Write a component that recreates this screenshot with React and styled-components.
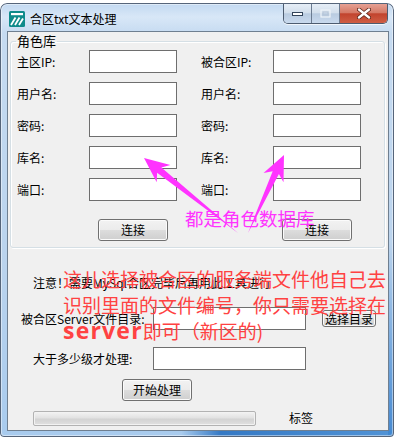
import React from "react";
import styled, { createGlobalStyle } from "styled-components";

const GlobalStyle = createGlobalStyle`
  html, body { margin: 0; padding: 0; background: #ffffff; }
  body { font-family: "Noto Sans CJK SC", "Noto Sans", sans-serif; }
`;

const Page = styled.div`
  position: relative;
  width: 399px;
  height: 437px;
  overflow: hidden;
`;

const Window = styled.div`
  box-sizing: border-box;
  width: 394px;
  height: 434px;
  margin-top: 3px;
  padding: 0 5px 6px 7px;
  display: flex;
  flex-direction: column;
  border-radius: 7px 7px 4px 4px;
  box-shadow: inset 0 0 0 1px #56657a, inset 0 0 0 2px rgba(255, 255, 255, 0.45);
  background:
    linear-gradient(90deg, rgba(58, 128, 200, 0) 0%, rgba(58, 128, 200, 0) 46%, rgba(40, 112, 192, 0.9) 56%, rgba(66, 138, 210, 0.85) 100%) left bottom / 100% 7px no-repeat,
    linear-gradient(180deg, rgba(60, 130, 205, 0) 55%, rgba(60, 130, 205, 0.9) 100%) right top / 6px 100% no-repeat,
    linear-gradient(180deg, #c1d8f1 0px, #d8e7f7 14px, #c6dbf1 30px, #bad3ed 60%, #a8cbee 100%);
`;

const TitleBar = styled.div`
  height: 28px;
  display: flex;
  align-items: flex-start;
`;

const TitleLeft = styled.div`
  display: flex;
  align-items: center;
  gap: 5px;
  padding: 8px 0 0 2px;
`;

const TitleText = styled.span`
  font-size: 12px;
  line-height: 16px;
  color: #000;
`;

const Caption = styled.div`
  display: flex;
  margin: 1px 1px 0 auto;
  height: 19px;
  border: 1px solid #4d5c70;
  border-top: none;
  border-radius: 0 0 5px 5px;
  overflow: hidden;
  box-shadow: 0 1px 0 rgba(255, 255, 255, 0.7);
`;

const CapBtn = styled.div`
  width: ${(p) => p.$w}px;
  display: flex;
  align-items: center;
  justify-content: center;
  background: ${(p) =>
    p.$close
      ? "linear-gradient(180deg, #e6a194 0%, #d57a67 45%, #c2442e 52%, #cf5e45 100%)"
      : "linear-gradient(180deg, #e6eef7 0%, #d3dfec 45%, #b9cbe0 52%, #c9daee 100%)"};
  & + & {
    border-left: 1px solid #6b7b90;
  }
`;

const Client = styled.div`
  flex: 1;
  box-sizing: border-box;
  border: 1px solid #6f7f90;
  background: #f0f0f0;
  display: flex;
  flex-direction: column;
  font-size: 12px;
  color: #000;
`;

const Group = styled.fieldset`
  margin: 2px 3px 0 2px;
  padding: 2px 0 6px 6px;
  border: 1px solid #d5dfe5;
  border-radius: 3px;
  box-shadow: inset 1px 1px 0 #fff, 1px 1px 0 #fff;
  min-width: 0;
`;

const Legend = styled.legend`
  padding: 0 1px;
  margin-left: -1px;
  font-size: 13px;
  line-height: 14px;
`;

const FieldGrid = styled.div`
  display: grid;
  grid-template-columns: 72px 112px 72px 88px;
  grid-auto-rows: 23px;
  row-gap: 9px;
  align-items: center;
`;

const Label = styled.span`
  font-size: 12px;
  line-height: 16px;
  white-space: nowrap;
  width: ${(p) => (p.$w ? `${p.$w}px` : "auto")};
  flex: none;
`;

const TextBox = styled.input`
  box-sizing: border-box;
  width: ${(p) => p.$w || 88}px;
  height: 23px;
  margin: 0;
  padding: 0 2px;
  background: #fff;
  border: 1px solid #6e6e6e;
  outline: none;
  flex: none;
`;

const ButtonRow = styled.div`
  display: flex;
  gap: 114px;
  margin-top: 18px;
  padding-left: 81px;
`;

const Btn = styled.button`
  box-sizing: border-box;
  width: ${(p) => p.$w}px;
  height: ${(p) => p.$h}px;
  margin: 0;
  padding: 0;
  flex: none;
  border: 1px solid #707070;
  border-radius: 3px;
  background: linear-gradient(180deg, #f2f2f2 0%, #ebebeb 50%, #dddddd 50%, #cfcfcf 100%);
  box-shadow: inset 0 0 0 1px #fbfbfb;
  font-family: "Noto Sans CJK SC", sans-serif;
  font-size: ${(p) => p.$fs || 12}px;
  line-height: 1;
  color: #000;
`;

const Notice = styled.div`
  margin: 27px 0 0 25px;
  font-size: 12px;
  line-height: 16px;
  white-space: nowrap;
`;

const FormRow = styled.div`
  display: flex;
  align-items: center;
  margin-top: ${(p) => p.$mt}px;
  padding-left: ${(p) => p.$pl}px;
`;

const SideBtnWrap = styled.div`
  margin-left: 16px;
  display: flex;
`;

const StartWrap = styled.div`
  margin: 9px 0 0 114px;
  display: flex;
`;

const Progress = styled.div`
  box-sizing: border-box;
  width: 223px;
  height: 15px;
  border: 1px solid #b2b2b2;
  border-radius: 2px;
  background: linear-gradient(180deg, #f3f3f3 0%, #e2e2e2 45%, #d3d3d3 55%, #e0e0e0 100%);
  box-shadow: inset 0 0 0 1px #f2f2f2;
  flex: none;
`;

const ProgLabel = styled.span`
  margin-left: 33px;
  font-size: 12px;
  line-height: 16px;
`;

const Overlay = styled.svg`
  position: absolute;
  left: 0;
  top: 0;
  pointer-events: none;
`;

const PinkNote = styled.div`
  position: absolute;
  left: 185px;
  top: 207px;
  font-size: 18.5px;
  line-height: 22px;
  color: #ff33ff;
  white-space: nowrap;
`;

const RedNote = styled.div`
  position: absolute;
  left: 63px;
  top: 266px;
  width: 330px;
  font-size: 19px;
  line-height: 26px;
  color: #ff4242;
`;

const RedLine = styled.div`
  white-space: nowrap;
  height: 26px;
`;

const Latin = styled.span`
  font-family: "Open Sans", "Noto Sans", sans-serif;
  font-weight: 700;
  font-size: 23px;
  line-height: 1;
  letter-spacing: 1.2px;
`;

function AppIcon() {
  return (
    <svg width="16" height="16" viewBox="0 0 16 16">
      <rect x="0" y="0" width="16" height="16" rx="1.5" fill="#0f8b8b" />
      <rect x="2" y="2" width="12" height="2.2" fill="#ffffff" />
      <path d="M2 14 L6.5 6.5 M6 14 L10.5 6.5 M10 14 L14 7.5" stroke="#ffffff" strokeWidth="1.8" fill="none" />
    </svg>
  );
}

function arrow(tail, tip, headLen, headHalf, shaftHalf) {
  const dx = tip[0] - tail[0];
  const dy = tip[1] - tail[1];
  const len = Math.hypot(dx, dy);
  const ux = dx / len;
  const uy = dy / len;
  const px = -uy;
  const py = ux;
  const bx = tip[0] - ux * headLen;
  const by = tip[1] - uy * headLen;
  const jx = tip[0] - ux * headLen * 0.78;
  const jy = tip[1] - uy * headLen * 0.78;
  const pts = [
    [tail[0], tail[1]],
    [jx + px * shaftHalf, jy + py * shaftHalf],
    [bx + px * headHalf, by + py * headHalf],
    [tip[0], tip[1]],
    [bx - px * headHalf, by - py * headHalf],
    [jx - px * shaftHalf, jy - py * shaftHalf],
  ];
  return pts.map((p) => `${p[0].toFixed(1)},${p[1].toFixed(1)}`).join(" ");
}

const rows = [
  ["主区IP:", "被合区IP:"],
  ["用户名:", "用户名:"],
  ["密码:", "密码:"],
  ["库名:", "库名:"],
  ["端口:", "端口:"],
];

export default function App() {
  return (
    <Page>
      <GlobalStyle />
      <Window>
        <TitleBar>
          <TitleLeft>
            <AppIcon />
            <TitleText>合区txt文本处理</TitleText>
          </TitleLeft>
          <Caption>
            <CapBtn $w={27}>
              <svg width="13" height="6" viewBox="0 0 13 6">
                <rect x="1.5" y="1.5" width="10" height="3" fill="#ffffff" stroke="#33445a" strokeWidth="1" />
              </svg>
            </CapBtn>
            <CapBtn $w={27}>
              <svg width="11" height="9" viewBox="0 0 11 9">
                <rect x="1" y="1" width="9" height="7" fill="none" stroke="#eef3f9" strokeWidth="1.2" />
                <rect x="3" y="3" width="5" height="3" fill="none" stroke="#b5c4d6" strokeWidth="1" />
              </svg>
            </CapBtn>
            <CapBtn $w={47} $close>
              <svg width="14" height="11" viewBox="0 0 14 11">
                <path d="M2 1.5 L12 9.5 M12 1.5 L2 9.5" stroke="#5a2418" strokeWidth="4" strokeLinecap="round" />
                <path d="M2 1.5 L12 9.5 M12 1.5 L2 9.5" stroke="#ffffff" strokeWidth="2.4" strokeLinecap="round" />
              </svg>
            </CapBtn>
          </Caption>
        </TitleBar>
        <Client>
          <Group>
            <Legend>角色库</Legend>
            <FieldGrid>
              {rows.map(([a, b]) => (
                <React.Fragment key={a + b}>
                  <Label>{a}</Label>
                  <TextBox readOnly value="" />
                  <Label>{b}</Label>
                  <TextBox readOnly value="" />
                </React.Fragment>
              ))}
            </FieldGrid>
            <ButtonRow>
              <Btn $w={70} $h={22}>连接</Btn>
              <Btn $w={70} $h={22}>连接</Btn>
            </ButtonRow>
          </Group>
          <Notice>注意！需要MySql合区完毕后再用此工具进行</Notice>
          <FormRow $mt={16} $pl={13}>
            <Label $w={132}>被合区Server文件目录:</Label>
            <TextBox $w={153} readOnly value="" />
            <SideBtnWrap>
              <Btn $w={54} $h={17} $fs={12}>选择目录</Btn>
            </SideBtnWrap>
          </FormRow>
          <FormRow $mt={17} $pl={25}>
            <Label $w={120}>大于多少级才处理:</Label>
            <TextBox $w={153} readOnly value="" />
          </FormRow>
          <StartWrap>
            <Btn $w={70} $h={22}>开始处理</Btn>
          </StartWrap>
          <FormRow $mt={9} $pl={25}>
            <Progress />
            <ProgLabel>标签</ProgLabel>
          </FormRow>
        </Client>
      </Window>

      <Overlay width="399" height="437" viewBox="0 0 399 437">
        <polygon points={arrow([238, 233], [144, 158], 25, 11, 3.4)} fill="#ff33ff" />
        <polygon points={arrow([248, 233], [284, 155], 25, 11, 3.4)} fill="#ff33ff" />
      </Overlay>
      <PinkNote>都是角色数据库</PinkNote>
      <RedNote>
        <RedLine>这儿选择被合区的服务端文件他自己去</RedLine>
        <RedLine>识别里面的文件编号，你只需要选择在</RedLine>
        <RedLine>
          <Latin>server</Latin>即可（新区的)
        </RedLine>
      </RedNote>
    </Page>
  );
}
